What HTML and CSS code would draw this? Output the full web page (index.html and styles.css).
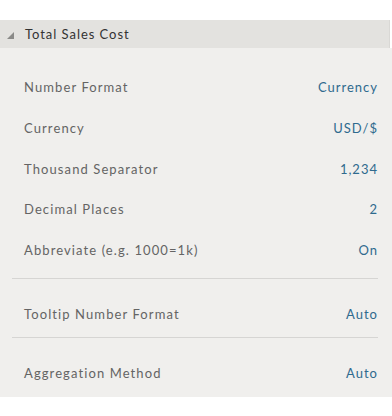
FILE: index.html
```html
<!DOCTYPE html>
<html>
<head>
<meta charset="utf-8">
<link rel="stylesheet" href="styles.css">
</head>
<body>
<div class="panel">
  <div class="header">
    <svg class="caret" width="7" height="7" viewBox="0 0 7 7"><polygon points="7,0 7,7 0,7" fill="#8a8a88"/></svg>
    <span class="title">Total Sales Cost</span>
  </div>
  <div class="body">
    <div class="group group-main">
      <div class="row"><span class="label">Number Format</span><span class="value">Currency</span></div>
      <div class="row"><span class="label">Currency</span><span class="value">USD/$</span></div>
      <div class="row"><span class="label">Thousand Separator</span><span class="value">1,234</span></div>
      <div class="row"><span class="label">Decimal Places</span><span class="value">2</span></div>
      <div class="row"><span class="label">Abbreviate (e.g. 1000=1k)</span><span class="value">On</span></div>
    </div>
    <div class="group">
      <div class="row"><span class="label">Tooltip Number Format</span><span class="value">Auto</span></div>
    </div>
    <div class="group group-last">
      <div class="row"><span class="label">Aggregation Method</span><span class="value">Auto</span></div>
    </div>
  </div>
</div>
</body>
</html>
```

FILE: styles.css
```css
html, body {
  margin: 0;
  padding: 0;
  background: #ffffff;
}
body {
  padding-top: 20px;
  font-family: Lato, "Open Sans", sans-serif;
  font-size: 13px;
}
.panel {
  width: 392px;
}
.header {
  height: 28px;
  width: 389px;
  background: #e3e2df;
  display: flex;
  align-items: center;
  border-right: 1px solid #d9d8d5;
}
.caret {
  margin-left: 7px;
  margin-right: 11px;
  margin-top: 2px;
}
.title {
  color: #333333;
  font-size: 13px;
  letter-spacing: 0.95px;
}
.body {
  background: #f0efed;
  padding: 19px 0 2px 0;
}
.group {
  margin: 0 14px 0 12px;
  padding: 0 0 2px 12px;
  border-bottom: 1px solid #d6d5d3;
}
.group + .group {
  margin-top: 14.6px;
}
.group-main {
  padding-bottom: 8px;
}
.group-last {
  border-bottom: none;
}
.row {
  height: 40.7px;
  display: flex;
  justify-content: space-between;
  align-items: center;
}
.label {
  color: #646464;
  letter-spacing: 1.1px;
}
.value {
  color: #2f6a8e;
  letter-spacing: 1px;
}
```
